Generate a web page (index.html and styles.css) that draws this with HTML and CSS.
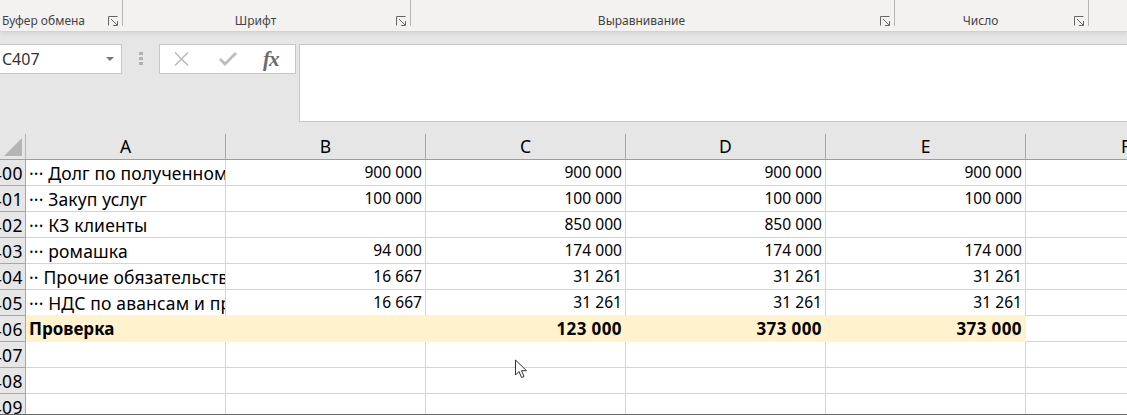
FILE: index.html
```html
<!DOCTYPE html>
<html lang="ru">
<head>
    <meta charset="UTF-8">
    <title>Книга1 - Excel</title>
    <link rel="stylesheet" href="styles.css">
</head>
<body>
  <div class="ribbon">
    <div class="group group-clip"><span class="group-name">Буфер обмена</span><svg class="launcher" width="11" height="10" viewBox="0 0 11 10"><path d="M.5 9.500V.5h9M3 3l6 6M9.500 5v4.500H5" fill="none" stroke="#666"/></svg></div>
    <div class="group group-font"><span class="group-name">Шрифт</span><svg class="launcher" width="11" height="10" viewBox="0 0 11 10"><path d="M.5 9.500V.5h9M3 3l6 6M9.500 5v4.500H5" fill="none" stroke="#666"/></svg></div>
    <div class="group group-align"><span class="group-name">Выравнивание</span><svg class="launcher" width="11" height="10" viewBox="0 0 11 10"><path d="M.5 9.500V.5h9M3 3l6 6M9.500 5v4.500H5" fill="none" stroke="#666"/></svg></div>
    <div class="group group-num"><span class="group-name">Число</span><svg class="launcher" width="11" height="10" viewBox="0 0 11 10"><path d="M.5 9.500V.5h9M3 3l6 6M9.500 5v4.500H5" fill="none" stroke="#666"/></svg></div>
  </div>

  <div class="formula-area">
    <div class="name-box">
      <span>C407</span>
      <i class="name-arrow"></i>
    </div>
    <div class="grip"><i></i><i></i><i></i></div>
    <div class="fx-buttons">
      <svg width="15" height="14" viewBox="0 0 15 14"><path d="M1 .5l13 13M14 .5l-13 13" stroke="#bcbcbc" stroke-width="1.600" fill="none"/></svg>
      <svg width="18" height="14" viewBox="0 0 18 14"><path d="M1 7l5 5L17 1" stroke="#bcbcbc" stroke-width="2.800" fill="none"/></svg>
      <span class="fx">fx</span>
    </div>
    <div class="formula-input"></div>
  </div>

  <div class="sheet">
    <div class="head-row">
      <div class="corner"><svg width="18" height="18" viewBox="0 0 18 18"><path d="M18 0v18H0z" fill="#b4b4b4"/></svg></div>
      <div class="col-head">A</div>
      <div class="col-head">B</div>
      <div class="col-head">C</div>
      <div class="col-head">D</div>
      <div class="col-head">E</div>
      <div class="col-head">F</div>
    </div>

    <div class="row">
      <div class="row-num">400</div>
      <div class="cell text">··· Долг по полученном</div>
      <div class="cell">900 000</div><div class="cell">900 000</div><div class="cell">900 000</div><div class="cell">900 000</div><div class="cell"></div>
    </div>
    <div class="row">
      <div class="row-num">401</div>
      <div class="cell text">··· Закуп услуг</div>
      <div class="cell">100 000</div><div class="cell">100 000</div><div class="cell">100 000</div><div class="cell">100 000</div><div class="cell"></div>
    </div>
    <div class="row">
      <div class="row-num">402</div>
      <div class="cell text">··· КЗ клиенты</div>
      <div class="cell"></div><div class="cell">850 000</div><div class="cell">850 000</div><div class="cell"></div><div class="cell"></div>
    </div>
    <div class="row">
      <div class="row-num">403</div>
      <div class="cell text">··· ромашка</div>
      <div class="cell">94 000</div><div class="cell">174 000</div><div class="cell">174 000</div><div class="cell">174 000</div><div class="cell"></div>
    </div>
    <div class="row">
      <div class="row-num">404</div>
      <div class="cell text">·· Прочие обязательств</div>
      <div class="cell">16 667</div><div class="cell">31 261</div><div class="cell">31 261</div><div class="cell">31 261</div><div class="cell"></div>
    </div>
    <div class="row before-total">
      <div class="row-num">405</div>
      <div class="cell text">··· НДС по авансам и пр</div>
      <div class="cell">16 667</div><div class="cell">31 261</div><div class="cell">31 261</div><div class="cell">31 261</div><div class="cell"></div>
    </div>
    <div class="row total">
      <div class="row-num">406</div>
      <div class="cell text">Проверка</div>
      <div class="cell"></div><div class="cell">123 000</div><div class="cell">373 000</div><div class="cell">373 000</div><div class="cell plain"></div>
    </div>
    <div class="row">
      <div class="row-num">407</div>
      <div class="cell text"></div><div class="cell"></div><div class="cell"></div><div class="cell"></div><div class="cell"></div><div class="cell"></div>
    </div>
    <div class="row">
      <div class="row-num">408</div>
      <div class="cell text"></div><div class="cell"></div><div class="cell"></div><div class="cell"></div><div class="cell"></div><div class="cell"></div>
    </div>
    <div class="row">
      <div class="row-num">409</div>
      <div class="cell text"></div><div class="cell"></div><div class="cell"></div><div class="cell"></div><div class="cell"></div><div class="cell"></div>
    </div>
  </div>

  <svg class="cursor" width="14" height="20" viewBox="0 0 14 20"><path d="M1.500 1v15l3.500-3.500 2.500 6 2.500-1-2.500-5.800h5z" fill="#fff" stroke="#333"/></svg>
</body>
</html>
```

FILE: styles.css
```css
/* General */
html, body {
    margin: 0;
    padding: 0;
    height: 415px;
    overflow: hidden;
}

body {
    position: relative;
    font-family: 'Noto Sans', sans-serif;
    background-color: #e6e6e6;
    color: #000;
}

/* Ribbon */
.ribbon {
    display: flex;
    height: 31px;
    background-color: #f3f2f1;
    box-shadow: 0 1px 0 #d2d2d2, 0 4px 3px #dadada;
}

.group {
    display: flex;
    align-items: flex-end;
    justify-content: center;
    position: relative;
    height: 26px;
    padding-right: 22px;
    border-right: 1px solid #b5b5b5;
    box-sizing: border-box;
}

.group-clip { width: 123px; justify-content: flex-start; padding-left: 2px; }
.group-font { width: 288px; }
.group-align { width: 484px; }
.group-num { width: 194px; }

.group-name {
    font-size: 12px;
    line-height: 20px;
    height: 18px;
    margin-bottom: -3px;
    white-space: nowrap;
    color: #444;
}

.launcher {
    position: absolute;
    right: 3px;
    bottom: 0;
}

/* Name box and formula bar */
.formula-area {
    display: flex;
    align-items: flex-start;
    height: 104px;
    padding-top: 13px;
    box-sizing: border-box;
}

.name-box {
    display: flex;
    align-items: center;
    justify-content: space-between;
    width: 122px;
    height: 30px;
    padding: 0 7px 0 2px;
    box-sizing: border-box;
    background: #fff;
    border: 1px solid #c6c6c6;
    border-left: none;
    font-size: 16px;
    color: #333;
}

.name-arrow {
    width: 0;
    height: 0;
    border-left: 4px solid transparent;
    border-right: 4px solid transparent;
    border-top: 4px solid #777;
}

.grip {
    display: flex;
    flex-direction: column;
    gap: 2px;
    width: 37px;
    padding-top: 8px;
    align-items: center;
}

.grip i {
    display: block;
    width: 4px;
    height: 3px;
    background: #b1b1b1;
}

.fx-buttons {
    display: flex;
    align-items: center;
    gap: 30px;
    width: 137px;
    height: 30px;
    padding: 0 14px;
    box-sizing: border-box;
    background: #fff;
    border: 1px solid #c6c6c6;
}

.fx {
    margin-left: -4px;
    font-family: 'Liberation Serif', serif;
    font-style: italic;
    font-weight: bold;
    font-size: 21px;
    letter-spacing: -1px;
    color: #6a6a6a;
}

.formula-input {
    flex: 1;
    height: 78px;
    margin-left: 3px;
    background: #fff;
    border: 1px solid #c6c6c6;
    border-right: none;
    box-sizing: border-box;
}

/* Sheet */
.sheet {
    height: 281px;
    margin-top: -1px;
    overflow: hidden;
    border-bottom: 1px solid #666;
    box-sizing: border-box;
}

.head-row {
    display: flex;
    height: 26px;
    border-bottom: 1px solid #9e9e9e;
    box-sizing: border-box;
}

.corner {
    display: flex;
    align-items: flex-end;
    justify-content: flex-end;
    width: 26px;
    flex: none;
    padding: 0 3px 3px 0;
    box-sizing: border-box;
    border-right: 1px solid #b5b5b5;
}

.col-head {
    width: 200px;
    flex: none;
    box-sizing: border-box;
    text-align: center;
    font-size: 17.500px;
    line-height: 25px;
    border-right: 1px solid #a8a8a8;
}

.row {
    display: flex;
    height: 26px;
}

.row-num {
    width: 26px;
    flex: none;
    box-sizing: border-box;
    background: #e6e6e6;
    border-right: 1px solid #a8a8a8;
    border-bottom: 1px solid #a8a8a8;
    font-size: 17.500px;
    line-height: 26px;
    text-align: right;
    padding-right: 2px;
    letter-spacing: 0.5px;
    overflow: hidden;
    direction: rtl;
}

.cell {
    width: 200px;
    flex: none;
    box-sizing: border-box;
    background: #fff;
    border-right: 1px solid #d4d4d4;
    border-bottom: 1px solid #d4d4d4;
    line-height: 25px;
    text-align: right;
    padding: 0 3px;
    white-space: nowrap;
    overflow: hidden;
    font-size: 15.600px;
}

.cell.text {
    text-align: left;
    font-size: 17.500px;
    line-height: 26px;
    letter-spacing: 0.15px;
}

.before-total .cell {
    border-bottom-color: #fff2cc;
}

.before-total .cell:last-child {
    border-bottom-color: #d4d4d4;
}

.total .cell {
    background: #fff2cc;
    border-right-color: #fff2cc;
    border-bottom-color: #fff2cc;
    font-weight: bold;
    font-size: 17px;
    letter-spacing: 0.4px;
}

.total .cell.text {
    font-size: 17px;
    letter-spacing: 0;
    line-height: 25px;
}

.total .cell.plain {
    background: #fff;
    border-right-color: #d4d4d4;
    border-bottom-color: #d4d4d4;
}

/* Mouse pointer drawn over the grid */
.cursor {
    position: absolute;
    left: 514px;
    top: 359px;
}
```
